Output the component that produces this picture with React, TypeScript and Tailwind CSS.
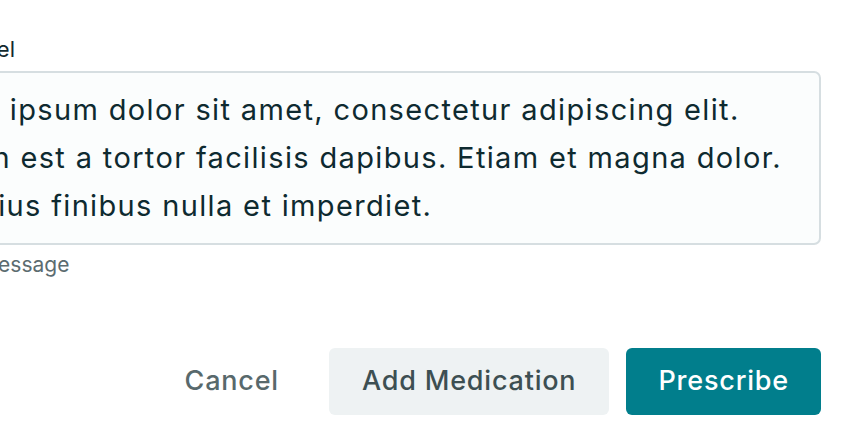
export default function App() {
  return (
    <div className="w-full h-[448px] overflow-hidden bg-white" style={{ fontFamily: "Inter, 'Noto Sans', sans-serif" }}>
      {/* form column runs off the left edge of the window */}
      <div className="ml-[-109px] mr-[33px] pt-[33px]">
        <label className="block text-[22px] leading-[32px] tracking-[0.2px] text-[#13292e]">Usage label</label>

        <div className="mt-[6px] border-2 border-[#d6dee1] rounded-[7px] bg-[#fbfdfd] px-[14px] py-[13px] text-[29px] leading-[48px] tracking-[1.35px] text-[#0e2a30]">
          Lorem ipsum dolor sit amet, consectetur adipiscing elit.
          <br />
          Nam in est a tortor facilisis dapibus. Etiam et magna dolor.
          <br />
          Ut varius finibus nulla et imperdiet.
        </div>

        <p className="mt-[6px] text-[21px] leading-[28px] text-[#5c6c70]">Optional message</p>

        {/* actions */}
        <div className="mt-[69px] flex justify-end gap-[17px]">
          <button className="h-[67px] px-[33px] rounded-[6px] text-[27px] font-medium tracking-[0.8px] text-[#58696c]">
            Cancel
          </button>
          <button className="h-[67px] px-[33px] rounded-[6px] bg-[#eef2f3] text-[27px] font-medium tracking-[0.8px] text-[#3d4f52]">
            Add Medication
          </button>
          <button className="h-[67px] px-[32px] rounded-[6px] bg-[#017e8c] text-[27px] font-medium tracking-[0.8px] text-white">
            Prescribe
          </button>
        </div>
      </div>
    </div>
  );
}
